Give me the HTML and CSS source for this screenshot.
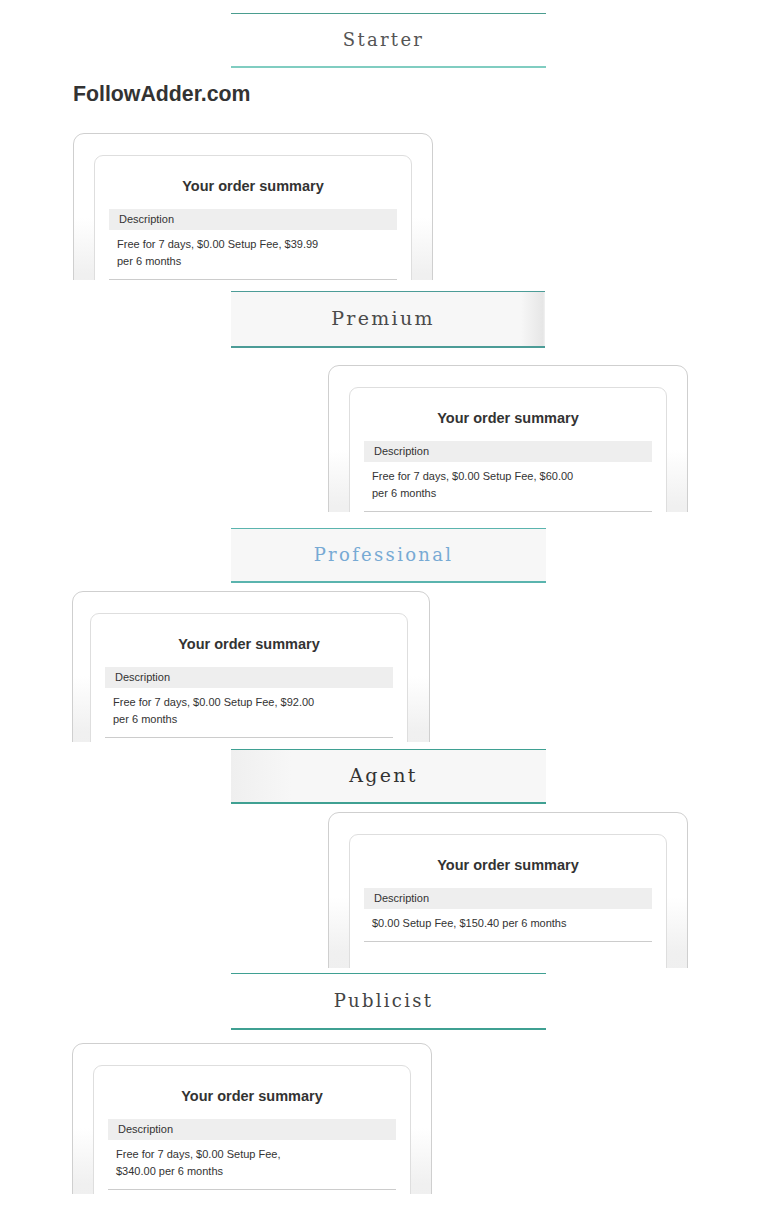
FILE: index.html
```html
<!DOCTYPE html>
<html lang="en">
<head>
<meta charset="utf-8">
<title>FollowAdder.com plans</title>
<link rel="stylesheet" href="styles.css">
</head>
<body>
<div class="page">

  <div class="tier tier--starter"><span class="tier__name">Starter</span></div>
  <h1 class="brand">FollowAdder.com</h1>
  <div class="clip clip--left clip--c1">
    <div class="card">
      <div class="summary">
        <h2 class="summary__title">Your order summary</h2>
        <div class="summary__head">Description</div>
        <div class="summary__row"><p class="summary__text">Free for 7 days, $0.00 Setup Fee, $39.99 per 6 months</p></div>
      </div>
    </div>
  </div>

  <div class="tier tier--premium"><span class="tier__name">Premium</span></div>
  <div class="clip clip--right clip--c2">
    <div class="card">
      <div class="summary">
        <h2 class="summary__title">Your order summary</h2>
        <div class="summary__head">Description</div>
        <div class="summary__row"><p class="summary__text">Free for 7 days, $0.00 Setup Fee, $60.00 per 6 months</p></div>
      </div>
    </div>
  </div>

  <div class="tier tier--professional"><span class="tier__name">Professional</span></div>
  <div class="clip clip--left clip--c3">
    <div class="card card--narrow">
      <div class="summary">
        <h2 class="summary__title">Your order summary</h2>
        <div class="summary__head">Description</div>
        <div class="summary__row"><p class="summary__text">Free for 7 days, $0.00 Setup Fee, $92.00 per 6 months</p></div>
      </div>
    </div>
  </div>

  <div class="tier tier--agent"><span class="tier__name">Agent</span></div>
  <div class="clip clip--right clip--c4">
    <div class="card">
      <div class="summary">
        <h2 class="summary__title">Your order summary</h2>
        <div class="summary__head">Description</div>
        <div class="summary__row"><p class="summary__text">$0.00 Setup Fee, $150.40 per 6 months</p></div>
      </div>
    </div>
  </div>

  <div class="tier tier--publicist"><span class="tier__name">Publicist</span></div>
  <div class="clip clip--left clip--c5">
    <div class="card">
      <div class="summary">
        <h2 class="summary__title">Your order summary</h2>
        <div class="summary__head">Description</div>
        <div class="summary__row"><p class="summary__text">Free for 7 days, $0.00 Setup Fee, $340.00 per 6 months</p></div>
      </div>
    </div>
  </div>

</div>
</body>
</html>
```

FILE: styles.css
```css
* { box-sizing: border-box; }

html, body {
  margin: 0;
  padding: 0;
  background: #fff;
}

body {
  font-family: "Liberation Sans", Arial, sans-serif;
  color: #333;
}

.page {
  display: flex;
  flex-direction: column;
  align-items: flex-start;
  width: 768px;
  min-height: 1207px;
}

/* ---------- plan tier banners ---------- */
.tier {
  margin-left: 231px;
  width: 315px;
  height: 55px;
  border-top: 1px solid #4b9e94;
  border-bottom: 2px solid #6cc0b6;
  padding-right: 10px;
  display: flex;
  align-items: center;
  justify-content: center;
  background: #fff;
}

.tier__name {
  font-family: "DejaVu Serif", "Liberation Serif", serif;
  font-size: 18px;
  letter-spacing: 2.3px;
  color: #555;
  position: relative;
  top: -1px;
}

.tier--starter {
  margin-top: 13px;
  border-top-color: #4a9d8f;
  border-bottom-color: #80cdc1;
}

.tier--premium {
  margin-top: 11px;
  width: 314px;
  height: 57px;
  border-top-color: #4c9c97;
  border-bottom-color: #4c9c97;
  background: linear-gradient(to right, #f7f7f7 0, #f7f7f7 290px, #e6e6e6 312px, #f2f2f2 314px);
}
.tier--premium .tier__name { color: #4a4a4a; font-size: 19px; }

.tier--professional {
  margin-top: 16px;
  border-top-color: #5ab4ae;
  border-bottom-color: #5ab4ae;
  background: #f7f7f7;
}
.tier--professional .tier__name { color: #77aad4; }

.tier--agent {
  margin-top: 7px;
  border-top-color: #3fa092;
  border-bottom-color: #3fa092;
  background: linear-gradient(to right, #efefef 0, #f7f7f7 60px, #f7f7f7 100%);
}
.tier--agent .tier__name { color: #333; font-size: 19px; }

.tier--publicist {
  margin-top: 5px;
  height: 57px;
  border-top-color: #3fa092;
  border-bottom-color: #3fa092;
}
.tier--publicist .tier__name { color: #444; }

/* ---------- brand ---------- */
.brand {
  margin: 14px 0 27px 73px;
  font-size: 21.3px;
  line-height: 24px;
  font-weight: bold;
  color: #333;
}

/* ---------- clipped order summary cards ---------- */
.clip {
  overflow: hidden;
  width: 362px;
}
.clip--left { margin-left: 72px; }
.clip--right { margin-left: 328px; }

.clip--c1 { margin-top: 0; height: 147px; margin-left: 73px; }
.clip--c2 { margin-top: 17px; height: 147px; }
.clip--c3 { margin-top: 8px; height: 151px; }
.clip--c4 { margin-top: 8px; height: 156px; }
.clip--c5 { margin-top: 13px; height: 151px; }

.card {
  width: 360px;
  height: 220px;
  border: 1px solid #cfcfcf;
  border-radius: 11px;
  padding: 21px 20px 0;
  background: linear-gradient(to bottom, #fff 0, #fff 84px, #f0f0f0 140px, #eeeeee 100%);
}

.card--narrow {
  width: 358px;
  padding-left: 17px;
}

.summary {
  width: 318px;
  height: 240px;
  border: 1px solid #dedede;
  border-radius: 9px;
  background: #fff;
  padding: 20px 14px 0;
}

.summary__title {
  margin: 0 0 13px;
  font-size: 14.5px;
  line-height: 20px;
  font-weight: bold;
  text-align: center;
  color: #333;
}

.summary__head {
  height: 21px;
  line-height: 21px;
  background: #eee;
  padding-left: 10px;
  font-size: 11px;
  color: #333;
}

.summary__row {
  padding: 6px 8px 9px;
  border-bottom: 1px solid #ccc;
}

.summary__text {
  margin: 0;
  max-width: 204px;
  font-size: 11px;
  line-height: 17px;
  color: #333;
}
```
